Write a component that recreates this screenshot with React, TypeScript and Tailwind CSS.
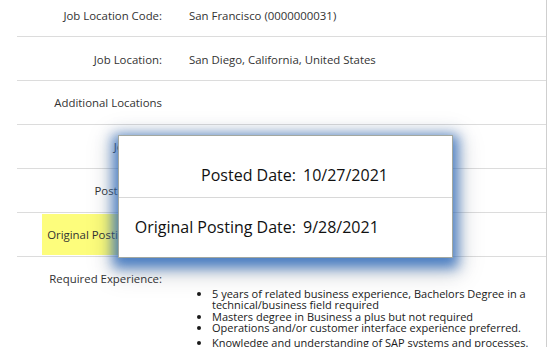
import React from "react";

const font = { fontFamily: '"Open Sans", "Liberation Sans", sans-serif' };

function Row({ label, value, h = "h-[44px]", extra = "" }: { label: string; value?: string; h?: string; extra?: string }) {
  return (
    <div className={`flex ${h} border-b border-[#dcdcdc] ${extra}`}>
      <div className="w-[151px] shrink-0 pr-[6px] text-right flex items-center justify-end">{label}</div>
      <div className="pl-[21px] flex items-center">{value}</div>
    </div>
  );
}

export default function App() {
  return (
    <div className="relative w-[547px] h-[347px] overflow-hidden bg-white text-[11.4px] text-[#333]" style={font}>
      <div className="ml-[17px] w-[530px] border-r border-[#cfcfcf] min-h-[347px]">
        <Row label="Job Location Code:" value="San Francisco (0000000031)" h="h-[37px] pb-[4px]" />
        <Row label="Job Location:" value="San Diego, California, United States" extra="pt-[3px]" />
        <Row label="Additional Locations" value="" />
        <Row label="Job Type:" value="Full Time" />
        <Row label="Posted Date:" value="10/27/2021" />
        <div className="flex h-[44px] border-b border-[#dcdcdc]">
          <div className="w-[151px] shrink-0 flex justify-end pt-[1px]">
            <div className="w-[126px] h-[41px] bg-[#fdfd7c] flex items-center justify-end pr-[6px]">Original Posting Date:</div>
          </div>
          <div className="pl-[21px] flex items-center">9/28/2021</div>
        </div>
        <div className="pt-[14px]">
          <div className="w-[151px] pr-[6px] text-right leading-[16px]">Required Experience:</div>
          <ul className="list-disc ml-[195px] mt-[1px] text-[11px] leading-[11.4px] text-[#1a1a1a] whitespace-nowrap">
            <li>5 years of related business experience, Bachelors Degree in a<br />technical/business field required</li>
            <li>Masters degree in Business a plus but not required</li>
            <li>Operations and/or customer interface experience preferred.</li>
            <li className="mt-[3px]">Knowledge and understanding of SAP systems and processes.</li>
          </ul>
        </div>
      </div>

      <div className="absolute left-[118px] top-[135px] w-[335px] h-[123px] bg-white border border-[#a3a8a0] shadow-[0_5px_12px_5px_rgba(50,110,190,0.85),0_8px_24px_8px_rgba(0,0,0,0.15)] text-[16px] text-[#111] flex flex-col">
        <div className="grid grid-cols-[177px_1fr] h-[62px] border-b border-[#d8d8d8] items-end pb-[10px]">
          <div className="text-right">Posted Date:</div>
          <div className="pl-[7px]">10/27/2021</div>
        </div>
        <div className="grid grid-cols-[177px_1fr] flex-1 items-center pb-[2px]">
          <div className="text-right">Original Posting Date:</div>
          <div className="pl-[7px]">9/28/2021</div>
        </div>
      </div>
    </div>
  );
}
